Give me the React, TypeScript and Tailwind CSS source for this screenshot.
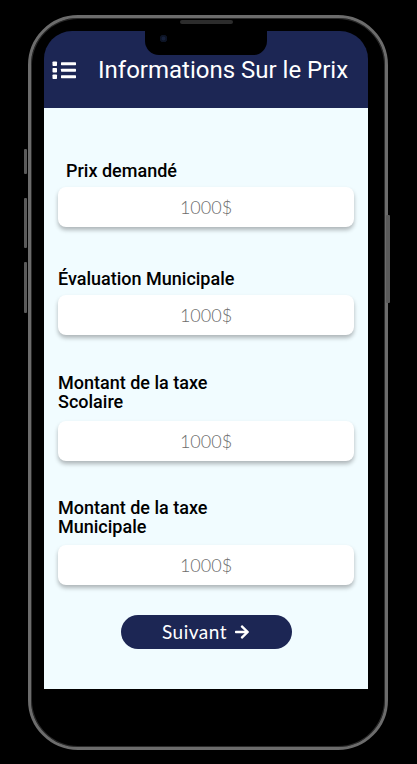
import React from "react";
import { FaArrowRight } from "react-icons/fa";

function MenuIcon() {
  return (
    <svg width="24" height="18" viewBox="0 0 24 18" fill="white">
      <rect x="0.5" y="0.5" width="4.5" height="4.5" rx="0.8" />
      <rect x="0.5" y="7" width="4.5" height="4.5" rx="0.8" />
      <rect x="0.5" y="13.5" width="4.5" height="4.5" rx="0.8" />
      <rect x="9" y="1.2" width="15" height="3" rx="0.6" />
      <rect x="9" y="7.7" width="15" height="3" rx="0.6" />
      <rect x="9" y="14.2" width="15" height="3" rx="0.6" />
    </svg>
  );
}

function Field({ label, twoLines, indent, mt, gap }: { label: React.ReactNode; twoLines?: boolean; indent?: boolean; mt: string; gap: string }) {
  return (
    <div className={`flex flex-col ${mt}`}>
      <div
        className={`${indent ? "pl-[8px]" : "pl-[0px]"} ${twoLines ? "leading-[19px]" : "leading-[20px]"} text-[18px] font-medium text-black`}
        style={{ fontFamily: "Roboto, 'Liberation Sans', sans-serif" }}
      >
        {label}
      </div>
      <div
        className={`${gap} h-[40px] w-full rounded-[8px] bg-white shadow-[0_3px_4px_rgba(0,0,0,0.28)] flex items-center justify-center`}
      >
        <span
          className="text-[18px] font-light text-[#6c6c6c]"
          style={{ fontFamily: "Lato, 'Open Sans', sans-serif" }}
        >
          1000$
        </span>
      </div>
    </div>
  );
}

export default function App() {
  return (
    <div className="w-[417px] h-[764px] bg-black overflow-hidden">
      <div className="relative ml-[28px] mt-[15px] w-[360px] h-[735px] rounded-[50px] border-[3px] border-[#6c6c6c] bg-black p-[13px] shadow-[inset_0_0_0_1px_#2a2a2a]">
        {/* speaker */}
        <div className="absolute left-[149px] top-[2px] w-[53px] h-[4px] rounded-full bg-[#2c2c2c]" />
        {/* side buttons */}
        <div className="absolute left-[-7px] top-[131px] w-[3px] h-[25px] rounded-[1px] bg-[#5a5a5a]" />
        <div className="absolute left-[-7px] top-[180px] w-[3px] h-[50px] rounded-[1px] bg-[#5a5a5a]" />
        <div className="absolute left-[-7px] top-[244px] w-[3px] h-[51px] rounded-[1px] bg-[#5a5a5a]" />
        <div className="absolute left-[355px] top-[197px] w-[4px] h-[88px] rounded-[1px] bg-[#5a5a5a]" />

        <div className="w-[324px] h-[658px] flex flex-col overflow-hidden rounded-t-[28px]">
          {/* header */}
          <div className="relative h-[77px] shrink-0 bg-[#1c2654] pt-[25px] pl-[8px]">
            <div className="absolute top-0 left-[101px] w-[122px] h-[24px] bg-black rounded-b-[14px]">
              <div className="absolute left-[15px] top-[4px] w-[7px] h-[7px] rounded-full bg-[#16203a] shadow-[inset_0_0_0_1.5px_#0d1424]" />
            </div>
            <div className="flex items-center h-[28px]">
              <MenuIcon />
              <span
                className="ml-[22px] text-[24px] leading-[28px] text-white"
                style={{ fontFamily: "Roboto, 'Liberation Sans', sans-serif" }}
              >
                Informations Sur le Prix
              </span>
            </div>
          </div>
          {/* content */}
          <div className="flex-1 bg-[#f1fcff] px-[14px] flex flex-col">
            <Field label="Prix demandé" indent mt="mt-[53px]" gap="mt-[6px]" />
            <Field label="Évaluation Municipale" mt="mt-[42px]" gap="mt-[6px]" />
            <Field
              label={<>Montant de la taxe<br />Scolaire</>}
              twoLines
              mt="mt-[38px]"
              gap="mt-[10px]"
            />
            <Field
              label={<>Montant de la taxe<br />Municipale</>}
              twoLines
              mt="mt-[37px]"
              gap="mt-[9px]"
            />
            <div className="mt-[30px] flex justify-center">
              <button
                className="w-[171px] h-[34px] rounded-full bg-[#1c2654] text-white flex items-center justify-center gap-[7px]"
                style={{ fontFamily: "Lato, 'Open Sans', sans-serif" }}
              >
                <span className="text-[19px] tracking-[0.5px]">Suivant</span>
                <FaArrowRight className="w-[16px] h-[16px]" />
              </button>
            </div>
          </div>
        </div>
      </div>
    </div>
  );
}
